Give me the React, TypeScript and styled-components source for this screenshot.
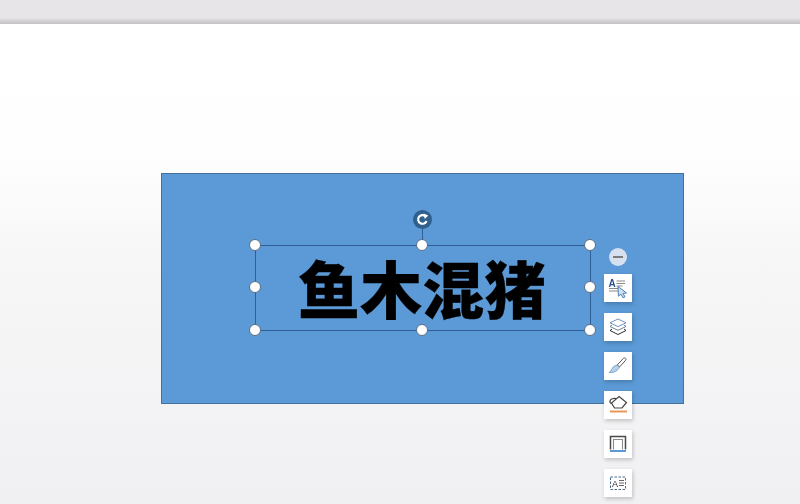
import React from "react";
import styled, { createGlobalStyle } from "styled-components";

const GlobalStyle = createGlobalStyle`
  html, body {
    margin: 0;
    padding: 0;
    width: 800px;
    height: 504px;
    overflow: hidden;
    font-family: "Liberation Sans", "Noto Sans CJK SC", sans-serif;
  }
`;

// handle centres, in px from the selection frame's corner
const handles = [
  { x: 0, y: 0 },
  { x: 167, y: 0 },
  { x: 335, y: 0 },
  { x: 0, y: 42 },
  { x: 335, y: 42 },
  { x: 0, y: 85 },
  { x: 167, y: 85 },
  { x: 335, y: 85 },
];

const TextFormatIcon = () => (
  <svg width="20" height="20" viewBox="0 0 20 20" fill="none">
    <text x="0.5" y="9" fontSize="10" fontWeight="700" fill="#2b4f8c" fontFamily="Liberation Sans">A</text>
    <path d="M8.500 3h8.500M8.500 5.500h8.500M8.500 8h6M1 10.500h10M1 13h9" stroke="#8a8a8a" strokeWidth="1.100" />
    <path d="M10 8.500l8.500 6.500-3.500.4 2 3.400-2 1-2-3.600-2.600 2z" fill="#cfe0f2" stroke="#4a7fb5" strokeWidth="1" />
  </svg>
);

const LayersIcon = () => (
  <svg width="20" height="20" viewBox="0 0 20 20" fill="none">
    <path d="M10 2l8 3.800-8 3.800-8-3.800z" fill="#fff" stroke="#6d94bd" strokeWidth="1" />
    <path d="M4 8l-2 1.500 8 3.800 8-3.800-2-1.500" stroke="#6f7f8f" strokeWidth="1" />
    <path d="M4 12l-2 1.500 8 4 8-4-2-1.500" stroke="#2d2d2d" strokeWidth="1" />
  </svg>
);

const BrushIcon = () => (
  <svg width="20" height="20" viewBox="0 0 20 20" fill="none">
    <path d="M17.400 2.200c.8.600.8 1.400.2 2.100l-6 6.600-2.300-2 6-6.500c.6-.6 1.400-.7 2.100-.2z" fill="#fff" stroke="#555" strokeWidth="1" />
    <path d="M9 9.200c-2.400.2-3.600 1.300-4.600 3-.8 1.500-1.800 3-3.200 4.300 3.400.2 6-.6 8-2.300 1.300-1.200 2-2.200 2.200-3z" fill="#b9d2ec" stroke="#6f9cc9" strokeWidth="0.900" />
  </svg>
);

const FillIcon = () => (
  <svg width="20" height="20" viewBox="0 0 20 20" fill="none">
    <path d="M11 1.500l7.500 6-4.500 5.500H6.500L3.500 8z" fill="#fff" stroke="#444" strokeWidth="1.200" />
    <path d="M8 3.500C5.500 3 2.500 4 2 6c-.3 1.200.5 2.200 1.500 2.500" stroke="#444" strokeWidth="1.200" />
    <rect x="2" y="15.500" width="17" height="2" fill="#e8975c" />
  </svg>
);

const OutlineIcon = () => (
  <svg width="20" height="20" viewBox="0 0 20 20" fill="none">
    <path d="M2.500 15.500V2.500h15v13" stroke="#4a4a4a" strokeWidth="1.500" />
    <path d="M5.500 15.500V5.500h9v10" stroke="#8c8c8c" strokeWidth="1.100" />
    <rect x="2" y="16" width="16" height="2" fill="#5b9bd5" />
  </svg>
);

const WrapIcon = () => (
  <svg width="20" height="20" viewBox="0 0 20 20" fill="none">
    <rect x="2.500" y="4" width="15" height="12.500" stroke="#4a6a8c" strokeDasharray="2.500 1.500" />
    <text x="4" y="13.500" fontSize="9" fill="#333" fontFamily="Liberation Sans">A</text>
    <path d="M11 7.500h5M11 10h5M11 12.500h5" stroke="#666" strokeWidth="1" />
  </svg>
);

const tools = [TextFormatIcon, LayersIcon, BrushIcon, FillIcon, OutlineIcon, WrapIcon];

export default function App() {
  return (
    <>
      <GlobalStyle />
      <Window>
        <TopBar />
        <Stage>
          <Shape>
            <Selection>
              <Title>鱼木混猪</Title>
              <RotateStem />
              <RotateHandle>
                <svg width="13" height="13" viewBox="0 0 12 12" fill="none">
                  <path d="M9.700 7.400A4 4 0 1 1 8.600 2.900" stroke="#fff" strokeWidth="2" />
                  <path d="M7 .4l4.300 2-3.200 3.200z" fill="#fff" />
                </svg>
              </RotateHandle>
              {handles.map((h) => (
                <Handle key={`${h.x}-${h.y}`} $x={h.x} $y={h.y} />
              ))}
            </Selection>
          </Shape>
          <ToolRail>
            <Collapse>
              <CollapseBar />
            </Collapse>
            {tools.map((Icon, i) => (
              <ToolButton key={i}>
                <Icon />
              </ToolButton>
            ))}
          </ToolRail>
        </Stage>
      </Window>
    </>
  );
}

const Window = styled.div`
  display: flex;
  flex-direction: column;
  width: 800px;
  height: 504px;
  overflow: hidden;
`;

const TopBar = styled.div`
  flex: none;
  height: 24px;
  box-sizing: border-box;
  background: linear-gradient(#e7e5e7 0, #e7e5e7 18px, #d2d1d2 21px, #c4c4c4 24px);
`;

const Stage = styled.div`
  position: relative;
  flex: 1;
  padding: 149px 0 0 161px;
  background: linear-gradient(#ffffff 0, #fefefe 130px, #f7f7f8 230px, #f0f0f2 100%);
`;

const Shape = styled.div`
  display: flex;
  align-items: center;
  justify-content: center;
  box-sizing: border-box;
  width: 523px;
  height: 231px;
  background: #5b9ad6;
  border: 1px solid #41719c;
`;

const Selection = styled.div`
  position: relative;
  display: flex;
  align-items: center;
  justify-content: center;
  box-sizing: border-box;
  width: 336px;
  height: 86px;
  margin: 0 0 1px 1px;
  box-shadow: inset 0 0 0 1px #2f5f96;
`;

const Title = styled.div`
  margin: 0 2px 3px 0;
  font-family: "Noto Sans CJK SC", sans-serif;
  font-size: 62px;
  font-weight: 900;
  line-height: 84px;
  color: #000;
  white-space: nowrap;
  -webkit-text-stroke: 0.3px #000;
`;

const Handle = styled.span<{ $x: number; $y: number }>`
  position: absolute;
  left: ${(p) => p.$x}px;
  top: ${(p) => p.$y}px;
  width: 12px;
  height: 12px;
  margin: -6px 0 0 -6px;
  box-sizing: border-box;
  border-radius: 50%;
  background: #fff;
  border: 1px solid #5a6f85;
`;

const RotateStem = styled.span`
  position: absolute;
  left: 167px;
  top: -20px;
  width: 1px;
  height: 20px;
  background: #2f5f96;
`;

const RotateHandle = styled.span`
  position: absolute;
  left: 158px;
  top: -35px;
  display: flex;
  align-items: center;
  justify-content: center;
  width: 19px;
  height: 19px;
  border-radius: 50%;
  background: #2f5f8c;
`;

const ToolRail = styled.div`
  position: absolute;
  left: 604px;
  top: 224px;
  display: flex;
  flex-direction: column;
  align-items: center;
  gap: 11px;
  width: 28px;
`;

const Collapse = styled.span`
  display: flex;
  align-items: center;
  justify-content: center;
  width: 18px;
  height: 18px;
  margin-bottom: -3px;
  border-radius: 50%;
  background: #d6e0ee;
`;

const CollapseBar = styled.span`
  width: 10px;
  height: 2px;
  background: #7b7b7b;
`;

const ToolButton = styled.div`
  display: flex;
  flex: none;
  align-items: center;
  justify-content: center;
  box-sizing: border-box;
  width: 28px;
  height: 28px;
  background: #fff;
  box-shadow: 1px 2px 4px rgba(0, 0, 0, 0.2);

  svg {
    filter: blur(0.3px);
  }
`;
